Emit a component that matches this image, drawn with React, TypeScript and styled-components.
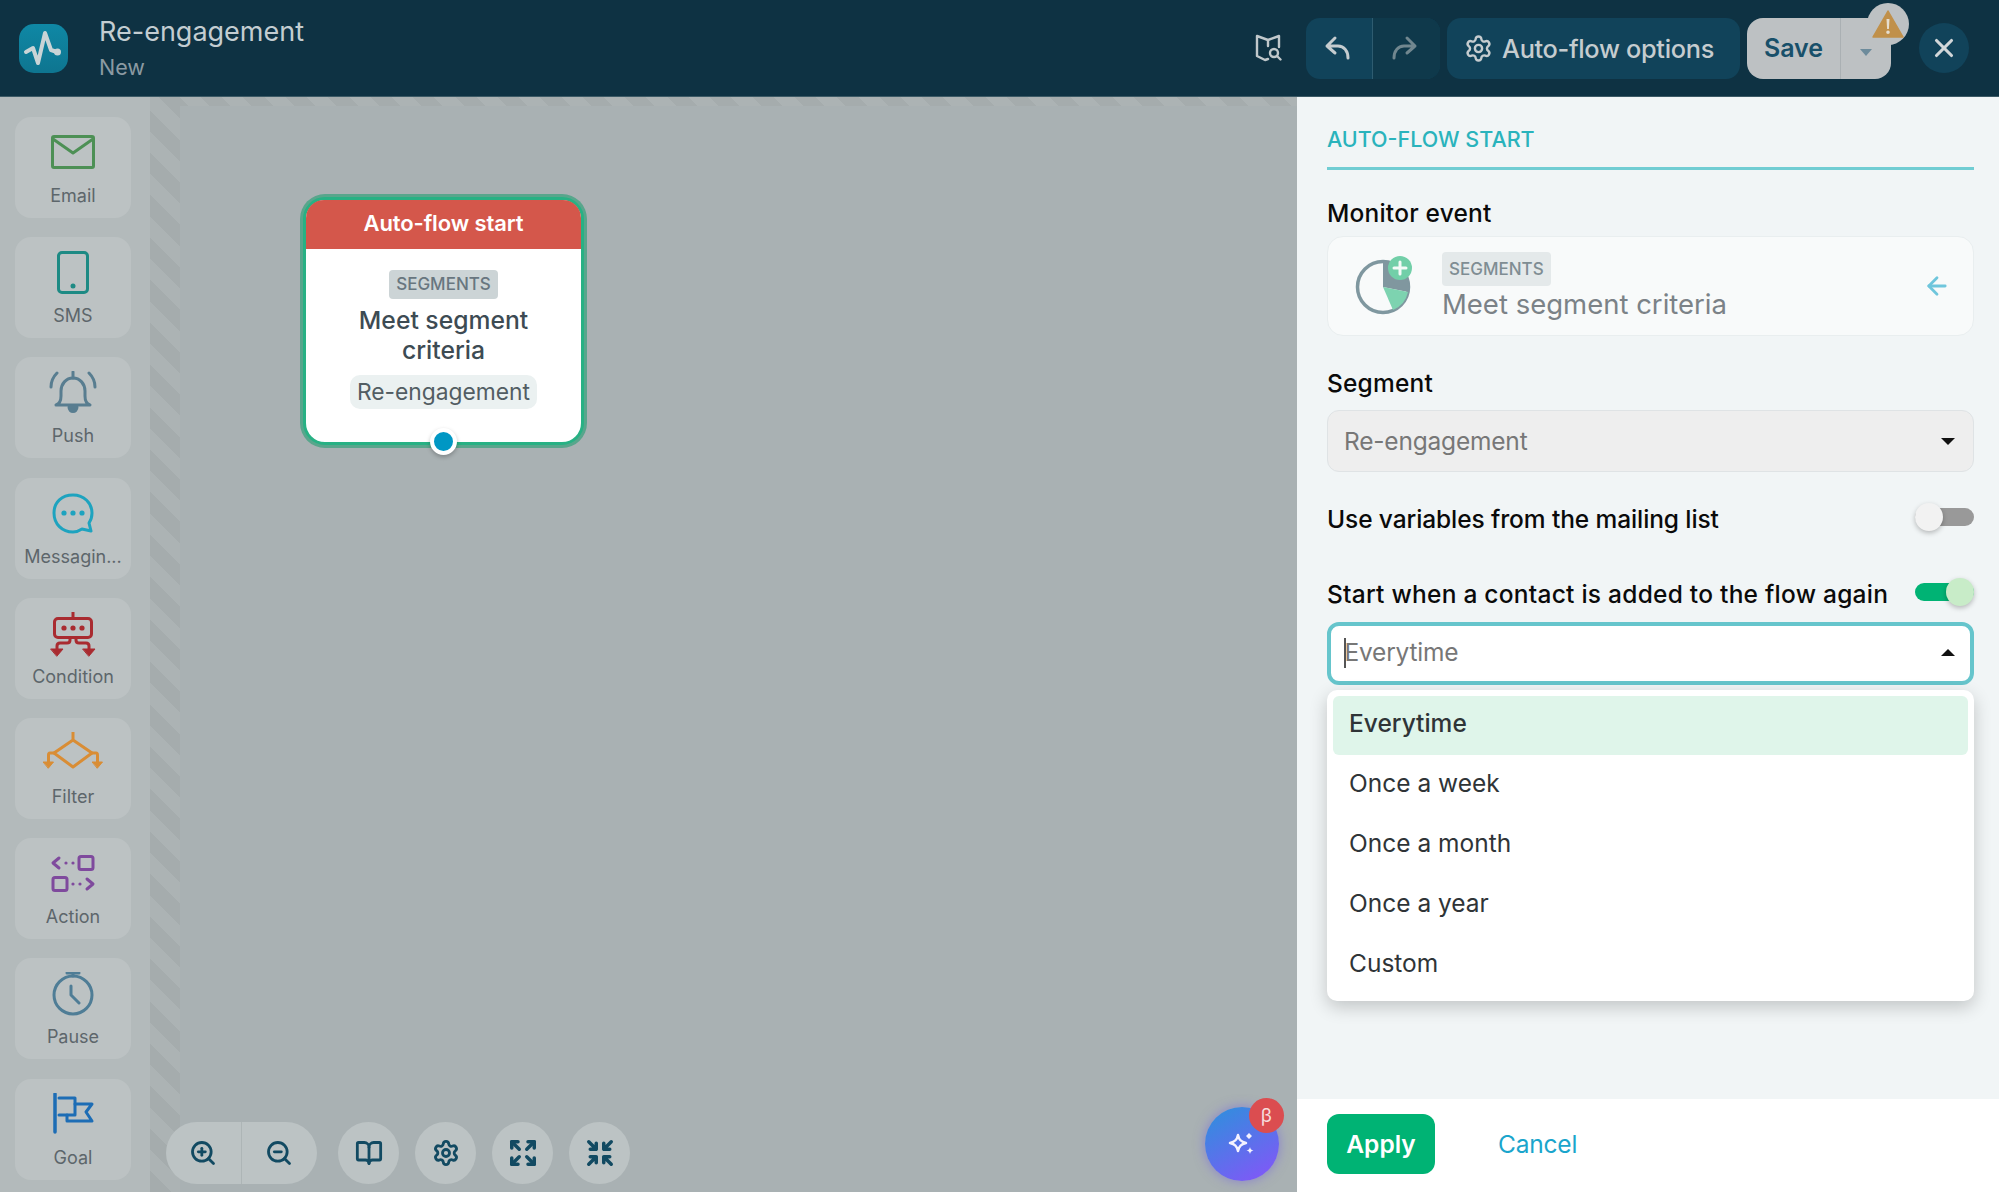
import React from "react";
import styled, { createGlobalStyle } from "styled-components";
import { ZoomIn, ZoomOut, BookOpen, Settings, Expand, Shrink, X, ArrowLeft } from "lucide-react";

const Global = createGlobalStyle`
  html, body { margin: 0; padding: 0; height: 100%; overflow: hidden; }
  body { font-family: Inter, "Noto Sans", "Liberation Sans", sans-serif; }
  #root { height: 100%; }
  * { box-sizing: border-box; }
`;

const Root = styled.div`
  width: 1999px; height: 1192px; display: flex; flex-direction: column; overflow: hidden;
`;

/* ---------- header ---------- */
const Header = styled.header`
  height: 97px; flex: none; background: #0e3243; display: flex; align-items: center; padding: 0 30px 0 19px;
  border-bottom: 1px solid #3c5a66;
`;
const Logo = styled.div`
  width: 49px; height: 49px; border-radius: 15px; background: linear-gradient(180deg, #0f88a5, #0e7590); display: grid;
  place-items: center; flex: none;
`;
const TitleBlock = styled.div`
  margin-left: 31px; display: flex; flex-direction: column; gap: 5px; margin-top: -3px;
`;
const Title = styled.div`
  font-size: 27px; line-height: 34px; color: #c3cdd1;
`;
const Sub = styled.div`
  font-size: 21.5px; line-height: 24px; color: #8b9aa2; margin-top: 1px;
`;
const HeaderRight = styled.div`
  margin-left: auto; display: flex; align-items: center;
`;
const MapBtn = styled.div`
  width: 26px; height: 28px; margin-right: 25px; display: grid; place-items: center; color: #c0c8cb;
`;
const Group = styled.div`
  height: 61px; border-radius: 14px; background: #11435a; display: flex; align-items: center; overflow: hidden;
  margin-right: 7px;
`;
const UndoBtn = styled.div<{ $dim?: boolean; $split?: boolean }>`
  width: 67px; height: 100%; display: grid; place-items: center; color: ${(p) => (p.$dim ? "#71878f" : "#c5cccf")};
  background: ${(p) => (p.$dim ? "#0f394b" : "transparent")};
  border-right: ${(p) => (p.$split ? "1px solid #2e5c70" : "none")};
  & > svg { margin-left: ${(p) => (p.$dim ? -5 : -2)}px; }
`;
const OptionsBtn = styled.div`
  width: 293px; height: 61px; border-radius: 14px; background: #11435a; color: #c5cccf; display: flex; align-items: center;
  gap: 9px; padding-left: 17px; font-size: 25.3px; font-weight: 500; letter-spacing: -0.3px; margin-right: 7px;
`;
const SaveGroup = styled.div`
  position: relative; width: 144px; height: 61px; border-radius: 16px; background: #bdc1c3; display: flex; align-items: center;
  margin-right: 28px;
`;
const SaveLabel = styled.div`
  width: 94px; height: 100%; display: grid; place-items: center; color: #18506a; font-size: 25px; font-weight: 600;
  border-right: 1px solid #aab0b3;
`;
const SaveCaret = styled.div`
  flex: 1; display: flex; justify-content: center; padding-top: 8px;
  &::after {
    content: ""; border-left: 6px solid transparent; border-right: 6px solid transparent; border-top: 7px solid #6d8b9b;
  }
`;
const WarnBadge = styled.div`
  position: absolute; left: 120px; top: -15px; width: 42px; height: 42px; border-radius: 50%; background: #bdc1c3;
  display: grid; place-items: center;
`;
const CloseBtn = styled.div`
  width: 50px; height: 50px; border-radius: 50%; background: #11435a; color: #d2d7d9; display: grid; place-items: center;
`;

/* ---------- body ---------- */
const Body = styled.div`
  flex: 1; display: flex; min-height: 0;
`;
const Sidebar = styled.aside`
  width: 150px; flex: none; background: #b3babb; padding: 20px 0 0 15px; display: flex; flex-direction: column; gap: 19.2px;
  overflow: hidden;
`;
const Tool = styled.div`
  width: 116px; height: 101px; flex: none; border-radius: 16px; background: #bcc2c3; display: flex; flex-direction: column;
  align-items: center; padding-top: 14px;
`;
const ToolIcon = styled.div<{ $c: string }>`
  height: 48px; display: flex; align-items: flex-start; justify-content: center; color: ${(p) => p.$c};
`;
const ToolLabel = styled.div`
  margin-top: 6px; font-size: 18px; line-height: 22px; color: #5d666b;
`;
const Canvas = styled.main`
  position: relative; flex: 1; padding: 9px 0 0 30px;
  background: repeating-linear-gradient(45deg, #a5acad 0 15px, #acb3b4 15px 30px);
  display: flex;
`;
const CanvasInner = styled.div`
  flex: 1; background: #a9b1b3;
`;
const Node = styled.div`
  position: absolute; left: 153px; top: 100px; width: 281px; height: 248px; border-radius: 22px; background: #fff;
  border: 3px solid #28b184; box-shadow: 0 0 0 3px #58a68c; display: flex; flex-direction: column; align-items: center;
`;
const NodeHead = styled.div`
  width: 100%; height: 49px; flex: none; background: #d4574b; border-radius: 18px 18px 0 0; color: #fff; padding-bottom: 4px;
  font-size: 22px; font-weight: 600; display: grid; place-items: center; letter-spacing: -0.1px;
`;
const NodeChip = styled.div`
  margin-top: 21px; height: 29px; padding: 0 7px; border-radius: 4px; background: #ccd4d6; color: #68767f;
  font-size: 17px; font-weight: 500; line-height: 29px;
`;
const NodeTitle = styled.div`
  margin-top: 7px; width: 200px; text-align: center; font-size: 24.7px; line-height: 29.5px; font-weight: 500; color: #3d4b53;
`;
const NodeTag = styled.div`
  margin-top: 10px; height: 34px; padding: 0 7px; border-radius: 10px; background: #ebf1f1; color: #525d63; font-size: 22.8px;
  line-height: 34px;
`;
const NodeDot = styled.div`
  position: absolute; left: 50%; bottom: -12.5px; width: 27px; height: 27px; margin-left: -13.5px; border-radius: 50%;
  background: #0097c4; border: 4.5px solid #fff; box-shadow: 0 2px 4px rgba(0,0,0,.25);
`;
const ZoomBar = styled.div`
  position: absolute; left: 16px; bottom: 8px; display: flex; gap: 16px;
`;
const ZoomPair = styled.div`
  display: flex; height: 62px; border-radius: 31px; background: #bcc3c4; overflow: hidden; margin-right: 5px;
`;
const ZoomHalf = styled.div<{ $split?: boolean }>`
  width: 75.5px; display: grid; place-items: center; color: #124a62; border-right: ${(p) => (p.$split ? "1px solid #adb5b6" : "none")};
`;
const ZoomRound = styled.div`
  width: 61px; height: 62px; border-radius: 50%; background: #bcc3c4; display: grid; place-items: center; color: #124a62;
`;
const AiBtn = styled.div`
  position: absolute; right: 18px; bottom: 11px; width: 74px; height: 74px; border-radius: 50%;
  background: linear-gradient(150deg, #2f8fdd 5%, #7a5cf5 85%); box-shadow: 0 0 12px rgba(110,90,230,.55);
  display: grid; place-items: center;
`;
const Beta = styled.div`
  position: absolute; right: -5px; top: -9px; width: 35px; height: 35px; border-radius: 50%; background: #db4d50; color: #f6dcdc;
  font-size: 19px; display: grid; place-items: center;
`;

/* ---------- side panel ---------- */
const Panel = styled.section`
  width: 702px; flex: none; background: #f1f5f6; display: flex; flex-direction: column;
`;
const PanelBody = styled.div`
  flex: 1; padding: 27px 25px 0 30px; display: flex; flex-direction: column;
`;
const PanelTitle = styled.div`
  font-size: 21.5px; line-height: 30px; font-weight: 500; color: #2ab3bc; padding-bottom: 13px;
  border-bottom: 3px solid #71cdd3;
`;
const Label = styled.div<{ $mt: number }>`
  margin-top: ${(p) => p.$mt}px; font-size: 24.5px; line-height: 30px; font-weight: 500; color: #0a0a0a; letter-spacing: 0.2px;
`;
const EventCard = styled.div`
  margin-top: 8px; height: 100px; border-radius: 16px; border: 1px solid #e9eeef; background: #f8fafa; display: flex;
  align-items: center; padding: 0 22px 0 23px;
`;
const EventText = styled.div`
  margin-left: 25px; flex: 1; display: flex; flex-direction: column; align-items: flex-start;
`;
const EventChip = styled.div`
  height: 34px; line-height: 34px; padding: 0 7px; border-radius: 4px; background: #e4e9ea; color: #7f8d93; font-size: 17px;
  font-weight: 500;
`;
const EventName = styled.div`
  margin-top: 1px; font-size: 27.5px; line-height: 34px; color: #7b8287;
`;
const SelectBox = styled.div<{ $focus?: boolean; $mt: number }>`
  margin-top: ${(p) => p.$mt}px; height: ${(p) => (p.$focus ? 63 : 62)}px; border-radius: 12px; position: relative;
  background: ${(p) => (p.$focus ? "#fff" : "#eeeeee")};
  border: ${(p) => (p.$focus ? "4px solid #66c5cc" : "1px solid #dfe3e5")};
  padding: ${(p) => (p.$focus ? "0 11px 2px 13px" : "0 14px 0 16px")}; display: flex; align-items: center; justify-content: space-between;
  font-size: 24.5px; letter-spacing: -0.2px; color: #777;
`;
const TextCaret = styled.span`
  display: inline-block; width: 1.5px; height: 30px; background: #555; vertical-align: -7px; margin-right: -1px;
`;
const Tri = styled.div<{ $up?: boolean }>`
  width: 0; height: 0; border-left: 7px solid transparent; border-right: 7px solid transparent; margin-right: 4px;
  ${(p) => (p.$up ? "border-bottom: 7px solid #111;" : "border-top: 7px solid #111;")}
`;
const ToggleRow = styled.div<{ $mt: number; $ls: number }>`
  margin-top: ${(p) => p.$mt}px; height: 36px; display: flex; align-items: center; justify-content: space-between;
  font-size: 24.5px; font-weight: 500; color: #0a0a0a; letter-spacing: ${(p) => p.$ls}px;
`;
const Toggle = styled.div<{ $on?: boolean }>`
  position: relative; width: 59px; height: 18px; margin-bottom: 4px; border-radius: 9px;
  background: ${(p) => (p.$on ? "#00b374" : "#999")};
  &::after {
    content: ""; position: absolute; top: -5px; ${(p) => (p.$on ? "right: 0;" : "left: 0;")} width: 28px; height: 28px; border-radius: 50%;
    background: ${(p) => (p.$on ? "#c8ecc8" : "#f2f2f2")}; box-shadow: 0 2px 5px rgba(0,0,0,.25);
  }
`;
const Combo = styled.div`
  position: relative;
`;
const Menu = styled.ul`
  position: absolute; left: 0; right: 0; top: calc(100% + 5px); margin: 0; padding: 6px; list-style: none; background: #fff;
  border-radius: 10px; box-shadow: 0 6px 18px rgba(0,0,0,.2); display: flex; flex-direction: column; gap: 1px; z-index: 2;
`;
const MenuItem = styled.li<{ $active?: boolean }>`
  height: 59px; padding: 0 0 6px 16px; display: flex; align-items: center; border-radius: 6px; font-size: 24.5px;
  color: #2f3437; font-weight: ${(p) => (p.$active ? 500 : 400)}; background: ${(p) => (p.$active ? "#dff5ea" : "transparent")};
`;
const Footer = styled.footer`
  height: 93px; flex: none; background: #fff; display: flex; align-items: center; padding: 0 0 3px 30px;
`;
const ApplyBtn = styled.div`
  width: 108px; height: 60px; border-radius: 12px; background: #00b374; color: #fff; font-size: 24.5px; font-weight: 600;
  display: grid; place-items: center;
`;
const CancelBtn = styled.div`
  margin-left: 63px; color: #1aa5cc; font-size: 24.5px; letter-spacing: -0.2px;
`;

/* ---------- drawings ---------- */
const S = { fill: "none", stroke: "currentColor", strokeWidth: 3, strokeLinecap: "round", strokeLinejoin: "round" } as const;

const EmailIcon = () => (
  <svg width="48" height="48" viewBox="0 0 48 48" {...S}>
    <rect x="3.5" y="5.5" width="41" height="31" rx="1.5" />
    <path d="M4 8l20 14L44 8" />
  </svg>
);
const SmsIcon = () => (
  <svg width="48" height="48" viewBox="0 0 48 48" {...S}>
    <rect x="9.5" y="1.5" width="29" height="40" rx="3.5" />
    <circle cx="24" cy="35" r="2.5" fill="currentColor" stroke="none" />
  </svg>
);
const PushIcon = () => (
  <svg width="48" height="48" viewBox="0 2 48 48" {...S}>
    <path d="M7 36c3-1 5-4 5-9v-5c0-7 5-13 12-13s12 6 12 13v5c0 5 2 8 5 9z" />
    <path d="M24 3v6M2 18c0-6 2-10 6-14M46 18c0-6-2-10-6-14" />
    <path d="M20 38c0 6 8 6 8 0z" fill="currentColor" />
  </svg>
);
const MsgIcon = () => (
  <svg width="48" height="48" viewBox="0 0 48 48" {...S}>
    <path d="M24 3c11 0 19 8 19 18 0 4-1 7-3 10l2 8-9-2c-3 2-6 3-9 3C13 40 5 32 5 21S13 3 24 3z" />
    <circle cx="15" cy="21" r="2.6" fill="currentColor" stroke="none" />
    <circle cx="24" cy="21" r="2.6" fill="currentColor" stroke="none" />
    <circle cx="33" cy="21" r="2.6" fill="currentColor" stroke="none" />
  </svg>
);
const ConditionIcon = () => (
  <svg width="48" height="48" viewBox="0 0 48 48" {...S}>
    <path d="M24 0v6" />
    <rect x="5.5" y="6.5" width="37" height="19" rx="3.5" />
    <circle cx="15" cy="16" r="2.6" fill="currentColor" stroke="none" />
    <circle cx="24" cy="16" r="2.6" fill="currentColor" stroke="none" />
    <circle cx="33" cy="16" r="2.6" fill="currentColor" stroke="none" />
    <path d="M21 26v2c0 2-1 3-3 3H11c-2 0-3 1-3 3v3M27 26v2c0 2 1 3 3 3h7c2 0 3 1 3 3v3" />
    <path d="M2 37h12l-6 7zM34 37h12l-6 7z" fill="currentColor" strokeWidth="1" />
  </svg>
);
const FilterIcon = () => (
  <svg width="60" height="48" viewBox="0 0 60 48" {...S}>
    <path d="M30 0v8L49 21 30 35 11 21 30 8" />
    <path d="M11 21H7c-1 0-1.5 1-1.5 2v7M49 21h4c1 0 1.5 1 1.5 2v7" />
    <path d="M0.5 30h10l-5 6zM49.5 30h10l-5 6z" fill="currentColor" strokeWidth="1" />
  </svg>
);
const ActionIcon = () => (
  <svg width="48" height="48" viewBox="0 0 48 48" {...S}>
    <path d="M10 6l-6 5 6 5M38 27l6 5-6 5" />
    <rect x="30" y="4.5" width="14" height="13" rx="2" />
    <rect x="4" y="25.5" width="14" height="13" rx="2" />
    <circle cx="17" cy="11" r="1.6" fill="currentColor" stroke="none" />
    <circle cx="24" cy="11" r="1.6" fill="currentColor" stroke="none" />
    <circle cx="24" cy="32" r="1.6" fill="currentColor" stroke="none" />
    <circle cx="31" cy="32" r="1.6" fill="currentColor" stroke="none" />
  </svg>
);
const PauseIcon = () => (
  <svg width="48" height="48" viewBox="0 0 48 48" {...S}>
    <circle cx="24" cy="23" r="19" />
    <path d="M18 1h12M24 1v3M22 14v9l8 8" />
  </svg>
);
const GoalIcon = () => (
  <svg width="48" height="48" viewBox="0 0 48 48" {...S}>
    <path d="M6 1v38" strokeWidth="3.5" />
    <path d="M10 5h16v17H10" />
    <path d="M26 11h17l-6 8 6 9H18v-6" />
  </svg>
);

const tools = [
  { label: "Email", c: "#4d9055", icon: <EmailIcon /> },
  { label: "SMS", c: "#1d8a84", icon: <SmsIcon /> },
  { label: "Push", c: "#587d90", icon: <PushIcon /> },
  { label: "Messagin...", c: "#1ea3bf", icon: <MsgIcon /> },
  { label: "Condition", c: "#a92b30", icon: <ConditionIcon /> },
  { label: "Filter", c: "#d98d35", icon: <FilterIcon /> },
  { label: "Action", c: "#7f4a9d", icon: <ActionIcon /> },
  { label: "Pause", c: "#4f7d96", icon: <PauseIcon /> },
  { label: "Goal", c: "#1d6db5", icon: <GoalIcon /> },
];

const options = ["Everytime", "Once a week", "Once a month", "Once a year", "Custom"];

export default function App() {
  return (
    <Root>
      <Global />
      <Header>
        <Logo>
          <svg width="49" height="49" viewBox="0 0 49 49" fill="none" stroke="#c9d4d6" strokeWidth="4" strokeLinecap="round" strokeLinejoin="round">
            <path d="M7 28l7-4 5 15 7-30 6 17 6 2" />
            <circle cx="38.5" cy="28" r="3.5" fill="#c9d4d6" stroke="none" />
          </svg>
        </Logo>
        <TitleBlock>
          <Title>Re-engagement</Title>
          <Sub>New</Sub>
        </TitleBlock>
        <HeaderRight>
          <MapBtn>
            <svg width="27" height="28" viewBox="0 0 27 28" fill="none" stroke="currentColor" strokeWidth="2.4" strokeLinecap="round" strokeLinejoin="round">
              <path d="M13 6L2 2v20l8 4 3-1M13 6l11-4v11M13 6v6" />
              <circle cx="19" cy="19" r="4" />
              <path d="M22 22l3.5 3.5" />
            </svg>
          </MapBtn>
          <Group>
            <UndoBtn $split>
              <svg width="28" height="28" viewBox="0 0 28 28" fill="none" stroke="currentColor" strokeWidth="3" strokeLinecap="round" strokeLinejoin="round">
                <path d="M11 4L3 12l8 7M3 12h11c6 0 10 5 10 12" />
              </svg>
            </UndoBtn>
            <UndoBtn $dim>
              <svg width="28" height="28" viewBox="0 0 28 28" fill="none" stroke="currentColor" strokeWidth="3" strokeLinecap="round" strokeLinejoin="round">
                <path d="M17 4l8 8-8 7M25 12H14C8 12 4 17 4 24" />
              </svg>
            </UndoBtn>
          </Group>
          <OptionsBtn>
            <Settings size={29} strokeWidth={2} />
            Auto-flow options
          </OptionsBtn>
          <SaveGroup>
            <SaveLabel>Save</SaveLabel>
            <SaveCaret />
            <WarnBadge>
              <svg width="32" height="28" viewBox="0 0 32 28">
                <path d="M16 1L31 27H1z" fill="#c0904a" stroke="#c0904a" strokeWidth="1.5" strokeLinejoin="round" />
                <path d="M14.5 9h3l-.6 10h-1.8zM16 20.5a1.8 1.8 0 1 1 0 3.6 1.8 1.8 0 0 1 0-3.6z" fill="#e6ded0" />
              </svg>
            </WarnBadge>
          </SaveGroup>
          <CloseBtn>
            <X size={30} strokeWidth={2.5} />
          </CloseBtn>
        </HeaderRight>
      </Header>
      <Body>
        <Sidebar>
          {tools.map((t) => (
            <Tool key={t.label}>
              <ToolIcon $c={t.c}>{t.icon}</ToolIcon>
              <ToolLabel>{t.label}</ToolLabel>
            </Tool>
          ))}
        </Sidebar>
        <Canvas>
          <CanvasInner />
          <Node>
            <NodeHead>Auto-flow start</NodeHead>
            <NodeChip>SEGMENTS</NodeChip>
            <NodeTitle>Meet segment criteria</NodeTitle>
            <NodeTag>Re-engagement</NodeTag>
            <NodeDot />
          </Node>
          <ZoomBar>
            <ZoomPair>
              <ZoomHalf $split><ZoomIn size={28} strokeWidth={2.4} /></ZoomHalf>
              <ZoomHalf><ZoomOut size={28} strokeWidth={2.4} /></ZoomHalf>
            </ZoomPair>
            <ZoomRound><BookOpen size={28} strokeWidth={2.4} /></ZoomRound>
            <ZoomRound><Settings size={28} strokeWidth={2.4} /></ZoomRound>
            <ZoomRound><Expand size={30} strokeWidth={2.8} /></ZoomRound>
            <ZoomRound><Shrink size={30} strokeWidth={2.8} /></ZoomRound>
          </ZoomBar>
          <AiBtn>
            <svg width="30" height="30" viewBox="0 0 30 30" fill="#f4f2ff">
              <path d="M11 6c1 5 3 7 8 8-5 1-7 3-8 8-1-5-3-7-8-8 5-1 7-3 8-8z" fill="none" stroke="#f4f2ff" strokeWidth="2.5" strokeLinejoin="round" />
              <path d="M22 4l3 3-3 3-3-3zM23 18c.4 2 1 3 3.5 3.5-2.5.5-3 1.5-3.5 3.5-.5-2-1-3-3.5-3.5 2.5-.5 3-1.5 3.5-3.5z" />
            </svg>
            <Beta>β</Beta>
          </AiBtn>
        </Canvas>
        <Panel>
          <PanelBody>
            <PanelTitle>AUTO-FLOW START</PanelTitle>
            <Label $mt={28}>Monitor event</Label>
            <EventCard>
              <svg width="66" height="66" viewBox="0 0 66 66" fill="none">
                <circle cx="32" cy="34" r="25.5" stroke="#7f979f" strokeWidth="3.5" />
                <path d="M32 34V8.5A25.5 25.500 0 0 1 57 39z" fill="#80979f" />
                <path d="M32 34l25 5a25.5 25.5 0 0 1-15 18z" fill="#7dd3b0" />
                <circle cx="49" cy="15" r="12" fill="#72cfa8" />
                <path d="M49 9v12M43 15h12" stroke="#f4faf7" strokeWidth="3" strokeLinecap="round" />
              </svg>
              <EventText>
                <EventChip>SEGMENTS</EventChip>
                <EventName>Meet segment criteria</EventName>
              </EventText>
              <ArrowLeft size={28} color="#6fc6dc" strokeWidth={2.4} />
            </EventCard>
            <Label $mt={32}>Segment</Label>
            <SelectBox $mt={12}>
              Re-engagement
              <Tri />
            </SelectBox>
            <ToggleRow $mt={29} $ls={-0.1}>
              Use variables from the mailing list
              <Toggle />
            </ToggleRow>
            <ToggleRow $mt={39} $ls={0.25}>
              Start when a contact is added to the flow again
              <Toggle $on />
            </ToggleRow>
            <Combo>
              <SelectBox $mt={10} $focus>
                <span><TextCaret />Everytime</span>
                <Tri $up />
              </SelectBox>
              <Menu>
                {options.map((o, i) => (
                  <MenuItem key={o} $active={i === 0}>{o}</MenuItem>
                ))}
              </Menu>
            </Combo>
          </PanelBody>
          <Footer>
            <ApplyBtn>Apply</ApplyBtn>
            <CancelBtn>Cancel</CancelBtn>
          </Footer>
        </Panel>
      </Body>
    </Root>
  );
}
